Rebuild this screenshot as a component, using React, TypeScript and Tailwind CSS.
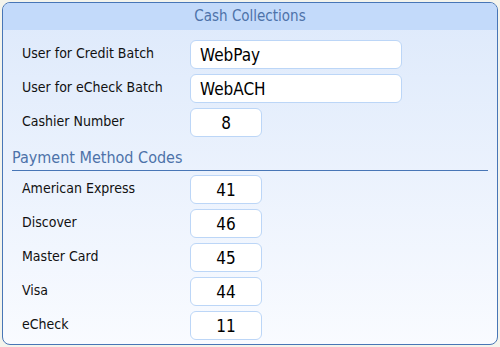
import React from 'react';

const font = { fontFamily: '"DejaVu Sans Condensed", "DejaVu Sans", Tahoma, sans-serif' };

const userRows = [
  { label: 'User for Credit Batch', value: 'WebPay', wide: true },
  { label: 'User for eCheck Batch', value: 'WebACH', wide: true },
  { label: 'Cashier Number', value: '8', wide: false },
];

const codeRows = [
  { label: 'American Express', value: '41' },
  { label: 'Discover', value: '46' },
  { label: 'Master Card', value: '45' },
  { label: 'Visa', value: '44' },
  { label: 'eCheck', value: '11' },
];

function Row({ label, value, wide }: { label: string; value: string; wide?: boolean }) {
  return (
    <div className="flex items-center h-[29px]">
      <div className="w-[187px] shrink-0 pl-[19px] text-[14px] text-[#111] leading-none -mt-[4px]">{label}</div>
      <input
        readOnly
        value={value}
        style={font}
        className={`h-[29px] bg-white border border-[#bcd6f7] rounded-[6px] text-[17px] text-black outline-none ${
          wide ? 'w-[212px] pl-[9px] text-left' : 'w-[72px] text-center'
        }`}
      />
    </div>
  );
}

export default function App() {
  return (
    <div className="w-[500px] h-[347px] bg-[#f4f4ec] p-[2px]" style={font}>
      <div className="w-[496px] h-[343px] border border-[#4876b6] rounded-[8px] overflow-hidden flex flex-col bg-gradient-to-b from-[#dde9fb] to-[#f9fbff]">
        {/* Header */}
        <div className="h-[27px] bg-[#c3dafa] flex items-center justify-center text-[15px] text-[#4d72a9] shrink-0">
          Cash Collections
        </div>

        <div className="flex flex-col pt-[10px]">
          <div className="flex flex-col gap-[5px]">
            {userRows.map((r) => (
              <Row key={r.label} {...r} />
            ))}
          </div>

          <div className="mt-[11px] mx-[9px] border-b border-[#4876b6] pb-[2px] text-[16px] leading-[20px] text-[#4d72a9]">
            Payment Method Codes
          </div>

          <div className="flex flex-col gap-[5px] mt-[4px]">
            {codeRows.map((r) => (
              <Row key={r.label} {...r} />
            ))}
          </div>
        </div>
      </div>
    </div>
  );
}
